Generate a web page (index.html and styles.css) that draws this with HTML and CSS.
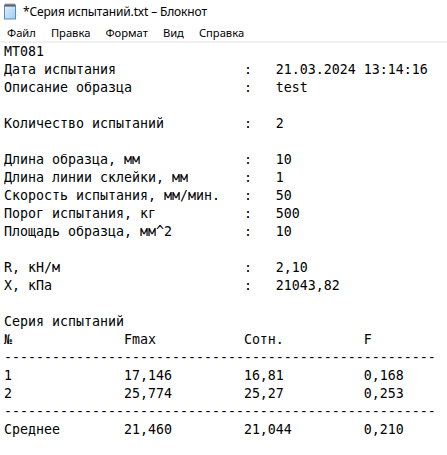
FILE: index.html
```html
<!DOCTYPE html>
<html lang="ru">
<head>
<meta charset="utf-8">
<title>*Серия испытаний.txt – Блокнот</title>
<link rel="stylesheet" href="styles.css">
</head>
<body>
<div class="window">
  <div class="titlebar">
    <svg class="app-icon" width="14" height="17" viewBox="0 0 14 17">
      <defs>
        <linearGradient id="pg" x1="0" y1="0" x2="1" y2="1">
          <stop offset="0" stop-color="#e4f3ff"/>
          <stop offset="1" stop-color="#9ccbef"/>
        </linearGradient>
      </defs>
      <rect x="1.5" y="2.5" width="11" height="13.5" fill="url(#pg)" stroke="#5b8db8" stroke-width="1"/>
      <rect x="1" y="1.5" width="12" height="2" fill="#6f7f8f"/>
      <path d="M3 0.5v3M5 0.5v3M7 0.5v3M9 0.5v3M11 0.5v3" stroke="#3c4550" stroke-width="0.9"/>
      <path d="M3.5 7h7M3.5 9.5h7M3.5 12h7" stroke="#b9dcf6" stroke-width="0.8"/>
    </svg>
    <span class="title">*Серия испытаний.txt – Блокнот</span>
  </div>
  <div class="menubar">
    <span class="menu-item">Файл</span>
    <span class="menu-item">Правка</span>
    <span class="menu-item">Формат</span>
    <span class="menu-item">Вид</span>
    <span class="menu-item">Справка</span>
  </div>
  <div class="separator"></div>
<pre class="editor">MT081
Дата испытания                :   21.03.2024 13:14:16
Описание образца              :   test

Количество испытаний          :   2

Длина образца, мм             :   10
Длина линии склейки, мм       :   1
Скорость испытания, мм/мин.   :   50
Порог испытания, кг           :   500
Площадь образца, мм^2         :   10

R, кН/м                       :   2,10
X, кПа                        :   21043,82

Серия испытаний
№              Fmax           Сотн.          F
------------------------------------------------------
1              17,146         16,81          0,168
2              25,774         25,27          0,253
------------------------------------------------------
Среднее        21,460         21,044         0,210
</pre>
</div>
</body>
</html>
```
FILE: styles.css
```css
html, body {
  margin: 0;
  padding: 0;
  background: #ffffff;
}

.window {
  width: 447px;
  height: 455px;
  display: flex;
  flex-direction: column;
  background: #ffffff;
  overflow: hidden;
}

.titlebar {
  height: 22px;
  display: flex;
  align-items: center;
  padding-left: 3px;
  font-family: "Noto Sans", "Open Sans", sans-serif;
  font-size: 12px;
  color: #000000;
}

.app-icon {
  display: block;
  flex: none;
}

.title {
  margin-left: 6px;
  letter-spacing: -0.15px;
}

.menubar {
  height: 19px;
  display: flex;
  align-items: center;
  padding-left: 7px;
  padding-top: 2px;
  box-sizing: border-box;
  gap: 15px;
  font-family: "Noto Sans", "Open Sans", sans-serif;
  font-size: 11.2px;
  color: #000000;
}

.separator {
  height: 2px;
  background: #f0f0f0;
  flex: none;
}

.editor {
  margin: 0;
  padding: 0 4px;
  font-family: "DejaVu Sans Mono", "Liberation Mono", monospace;
  font-size: 13.29px;
  line-height: 18px;
  color: #000000;
  white-space: pre;
}
```
